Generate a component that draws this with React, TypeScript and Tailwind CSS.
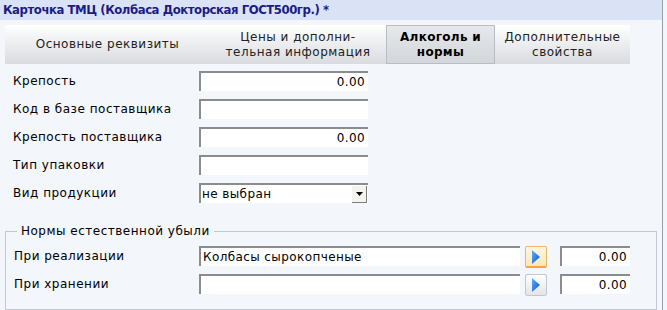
import React from 'react'

const font = { fontFamily: '"DejaVu Sans", Verdana, sans-serif' }

function Field({ value, right, className }: { value?: string; right?: boolean; className?: string }) {
    return (
        <div
            className={`h-[20px] bg-white border-t-2 border-l-2 border-t-[#8c8c8c] border-l-[#8c8c8c] flex items-center px-[3px] text-[12px] tracking-[0.4px] text-black ${right ? 'justify-end' : ''} ${className || ''}`}
        >
            {value}
        </div>
    )
}

function Row({ label, children }: { label: string; children: React.ReactNode }) {
    return (
        <div className="flex items-center h-[20px]">
            <div className="w-[186px] text-[12px] tracking-[0.5px] text-black whitespace-nowrap">{label}</div>
            {children}
        </div>
    )
}

function ArrowButton({ hot }: { hot?: boolean }) {
    return (
        <div
            className={`w-[22px] h-[22px] rounded-[2px] border flex items-center justify-center ${hot
                ? 'border-[#e8b765] bg-gradient-to-b from-[#fff6e2] to-[#fde6b6] border-b-2 border-b-[#f2a93b]'
                : 'border-[#c4c7cc] bg-gradient-to-b from-white to-[#e2e4e8]'
                }`}
        >
            <svg width="10" height="14" viewBox="0 0 10 14">
                <defs>
                    <linearGradient id="ag" x1="0" y1="0" x2="1" y2="1">
                        <stop offset="0" stopColor="#5fb4ff" />
                        <stop offset="1" stopColor="#0a4fc4" />
                    </linearGradient>
                </defs>
                <path d="M1 0 L9 7 L1 14 Z" fill="url(#ag)" />
            </svg>
        </div>
    )
}

const tabs = [
    { label: 'Основные реквизиты', w: 205 },
    { label: 'Цены и дополни-\nтельная информация', w: 176 },
    { label: 'Алкоголь и\nнормы', w: 109, active: true },
    { label: 'Дополнительные\nсвойства', w: 135 },
]

export default function App() {
    return (
        <div className="w-[667px] h-[310px] bg-[#f3f6fb] flex overflow-hidden" style={font}>
            <div className="w-[663px] h-full flex flex-col border-r border-[#9a9ea6]">
                {/* Title */}
                <div
                    className="h-[20px] bg-[#dae3f5] flex items-center pl-[3px] text-[13px] font-bold text-[#1c1c84] tracking-[-0.45px] whitespace-nowrap"
                    style={{ fontFamily: '"DejaVu Sans Condensed", "DejaVu Sans", sans-serif' }}
                >
                    Карточка ТМЦ (Колбаса Докторская ГОСТ500гр.) *
                </div>

                {/* Tabs */}
                <div className="flex ml-[5px] mt-[5px] h-[39px]">
                    {tabs.map((t) => (
                        <div
                            key={t.label}
                            style={{ width: t.w }}
                            className={`h-full flex items-center justify-center text-center whitespace-pre leading-[15px] text-[12px] ${t.active
                                ? 'bg-gradient-to-b from-[#e6e8eb] to-[#d3d6da] border border-[#b9bcc2] font-bold text-black tracking-[0.3px]'
                                : 'bg-gradient-to-b from-white to-[#d9dbdf] text-[#222] tracking-[0.5px]'
                                }`}
                        >
                            {t.label}
                        </div>
                    ))}
                </div>

                {/* Form */}
                <div className="flex flex-col gap-[8px] pl-[13px] mt-[7px]">
                    <Row label="Крепость">
                        <Field value="0.00" right className="w-[169px]" />
                    </Row>
                    <Row label="Код в базе поставщика">
                        <Field className="w-[169px]" />
                    </Row>
                    <Row label="Крепость поставщика">
                        <Field value="0.00" right className="w-[169px]" />
                    </Row>
                    <Row label="Тип упаковки">
                        <Field className="w-[169px]" />
                    </Row>
                    <Row label="Вид продукции">
                        <div className="w-[169px] h-[20px] bg-white border-t-2 border-l-2 border-t-[#8c8c8c] border-l-[#8c8c8c] flex items-center text-[12px] tracking-[0.4px]">
                            <span className="flex-1 pl-[1px]">не выбран</span>
                            <div className="w-[15px] h-[17px] mr-[1px] bg-[#f4f4ee] border-r border-b border-[#7c7c7c] flex items-center justify-center">
                                <svg width="7" height="4" viewBox="0 0 7 4">
                                    <path d="M0 0 H7 L3.5 4 Z" fill="#000" />
                                </svg>
                            </div>
                        </div>
                    </Row>
                </div>

                {/* Fieldset */}
                <fieldset className="mx-[5px] mt-[21px] flex-1 border border-[#c2c8d2] pl-[7px] pr-0 pb-0 min-w-0">
                    <legend className="ml-[4px] px-[4px] text-[12px] tracking-[0.5px] text-black leading-[14px]">
                        Нормы естественной убыли
                    </legend>
                    <div className="flex flex-col gap-[6px] mt-[8px]">
                        {[
                            { label: 'При реализации', value: 'Колбасы сырокопченые', hot: true },
                            { label: 'При хранении', value: '', hot: false },
                        ].map((r) => (
                            <div key={r.label} className="flex items-start h-[22px]">
                                <div className="w-[186px] h-[20px] flex items-center text-[12px] tracking-[0.5px] pl-[1px]">{r.label}</div>
                                <Field value={r.value} className="w-[321px] pl-[2px]" />
                                <div className="ml-[5px]">
                                    <ArrowButton hot={r.hot} />
                                </div>
                                <Field value="0.00" right className="w-[70px] ml-[13px]" />
                            </div>
                        ))}
                    </div>
                </fieldset>
            </div>
            <div className="flex-1 bg-[#f3f6fb]" />
        </div>
    )
}
